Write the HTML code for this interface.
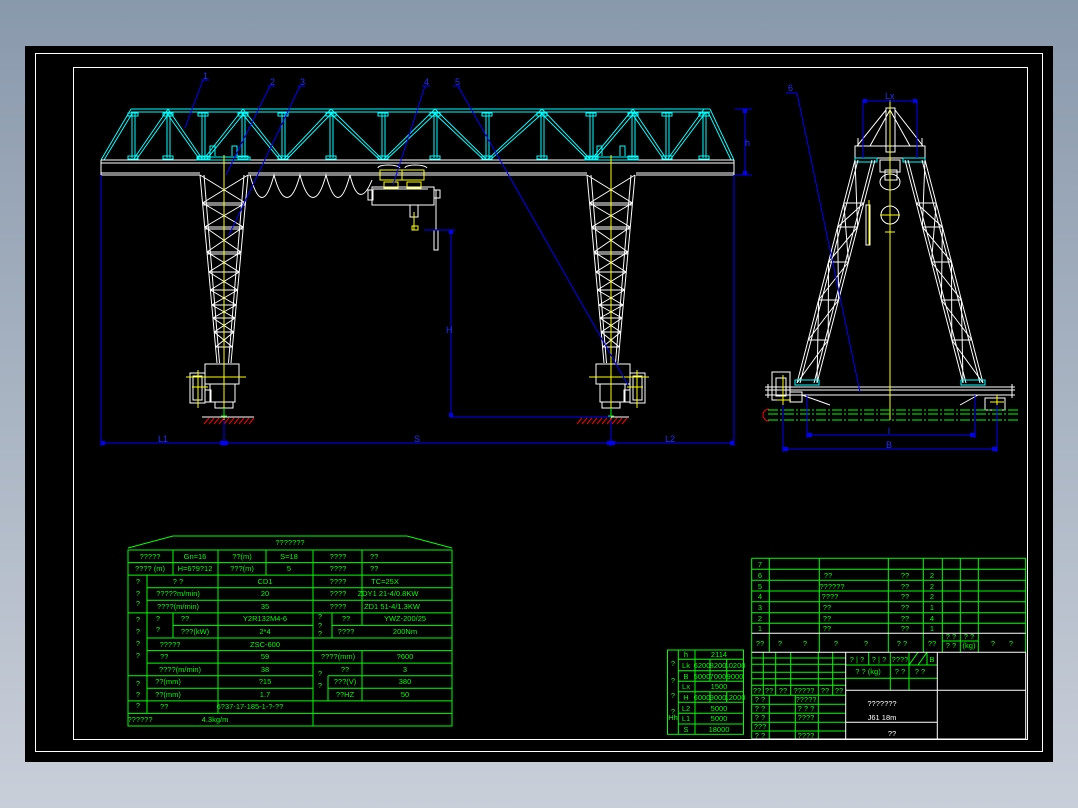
<!DOCTYPE html>
<html><head><meta charset="utf-8"><style>
html,body{margin:0;padding:0;width:1078px;height:808px;overflow:hidden;background:linear-gradient(#8999ac,#c9cfd9);}
svg{position:absolute;left:0;top:0;}
text{font-family:"Liberation Sans","DejaVu Sans",sans-serif;font-size:7.5px;fill:#00ff00;}
.w{stroke:#fff;fill:none;stroke-width:1}
.c{stroke:#00ffff;fill:none;stroke-width:1}
.y{stroke:#ffff00;fill:none;stroke-width:1}
.b{stroke:#0000ff;fill:none;stroke-width:1}
.g{stroke:#00ff00;fill:none;stroke-width:1}
.r{stroke:#ff0000;fill:none;stroke-width:1}
.bt{fill:#2030ff;font-size:9px}
.wt{fill:#fff}
</style></head><body>
<svg width="1078" height="808" viewBox="0 0 1078 808">
<rect x="25" y="46" width="1028" height="716" fill="#000"/>
<rect x="35.5" y="53.5" width="1007" height="698" class="w"/>
<rect x="73.5" y="67.5" width="954" height="672" class="w"/>

<!-- ========== FRONT VIEW ========== -->
<!-- truss -->
<path class="c" d="M131 109H710 M131 112H710 M101 160L131 109 M104 160L133 112 M734 160L710 109 M731 160L708 112
M133 160L168 109 M136 160L170 112 M168 109L203 160 M166 112L200 160 M203 160L243 109 M206 160L245 112 M243 109L283 160 M241 112L280 160
M283 160L331 109 M286 160L333 112 M331 109L383 160 M329 112L380 160 M383 160L435 109 M386 160L437 112 M435 109L487 160 M433 112L484 160
M487 160L542 109 M490 160L544 112 M542 109L591 160 M540 112L588 160 M591 160L633 109 M594 160L635 112 M633 109L667 160 M631 112L664 160 M667 160L704 109 M670 160L706 112"/>
<path class="c" d="M132 112V158M135 112V158 M167 112V158M170 112V158 M202 112V158M205 112V158 M242 112V158M245 112V158 M282 112V158M285 112V158 M330 112V158M333 112V158 M382 112V158M385 112V158 M434 112V158M437 112V158 M486 112V158M489 112V158 M541 112V158M544 112V158 M590 112V158M593 112V158 M632 112V158M635 112V158 M666 112V158M669 112V158 M703 112V158M706 112V158"/>
<path class="c" d="M128 113h10v3h-10z M163 113h10v3h-10z M198 113h10v3h-10z M238 113h10v3h-10z M278 113h10v3h-10z M326 113h10v3h-10z M378 113h10v3h-10z M430 113h10v3h-10z M482 113h10v3h-10z M537 113h10v3h-10z M586 113h10v3h-10z M628 113h10v3h-10z M662 113h10v3h-10z M699 113h10v3h-10z
M128 156h10v3h-10z M163 156h10v3h-10z M198 156h12v3h-12z M238 156h10v3h-10z M278 156h10v3h-10z M326 156h10v3h-10z M378 156h10v3h-10z M430 156h10v3h-10z M482 156h10v3h-10z M537 156h10v3h-10z M586 156h12v3h-12z M628 156h10v3h-10z M662 156h10v3h-10z M699 156h10v3h-10z"/>
<path class="c" d="M210 156V146h5v10 M232 156V146h5v10 M597 156V146h5v10 M620 156V146h5v10"/>
<!-- main beam -->
<path class="w" d="M101 160H734 M101 163H734 M101 173H200 M248 173H587 M636 173H734 M101 175H200 M248 175H587 M636 175H734 M101 160V175 M734 160V175"/>
<path class="c" d="M197 160h53v-3h-53z M585 160h53v-3h-53z"/>
<!-- legs -->
<g id="leg">
<path class="w" d="M200 175L217 363 M248 175L231 363 M204 175L219.5 363 M244 175L228.5 363
M200 175L245.5 203M248 175L202.5 203 M202.5 203L243.3 227M245.5 203L204.7 227 M204.7 227L241 252M243.3 227L207 252 M207 252L239.2 272M241 252L208.8 272 M208.8 272L237.6 290M239.2 272L210.4 290 M210.4 290L236.2 305M237.6 290L211.8 305 M211.8 305L235.1 318M236.2 305L212.9 318 M212.9 318L233.8 332M235.1 318L214.2 332 M214.2 332L232.4 347M233.8 332L215.6 347
M202.5 203H245.5 M204.7 227H243.3 M207 252H241 M208.8 272H239.2 M210.4 290H237.6 M211.8 305H236.2 M212.9 318H235.1 M214.2 332H233.8 M215.6 347H232.4 M202.5 205H245.5 M204.7 229H243.3 M207 254H241
M205 364h34v20h-34z M190 373h15v30h-15z M193 376h9v24h-9z M210 384h25v18h-25z M215 402h18v6h-18z M205 390h6v12h-6z"/>
<path class="y" d="M224 155V420 M186 377h60 M198 370v38 M192 387h16"/>
<path class="g" d="M224 408v8 M221 416h6"/>
<path class="w" d="M202 417H254"/>
<path class="r" d="M204 424l5-6M209 424l5-6M214 424l5-6M219 424l5-6M224 424l5-6M229 424l5-6M234 424l5-6M239 424l5-6M244 424l5-6M249 424l5-6"/>
</g>
<g transform="translate(387,0)"><path class="w" d="M200 175L217 363 M248 175L231 363 M204 175L219.5 363 M244 175L228.5 363
M200 175L245.5 203M248 175L202.5 203 M202.5 203L243.3 227M245.5 203L204.7 227 M204.7 227L241 252M243.3 227L207 252 M207 252L239.2 272M241 252L208.8 272 M208.8 272L237.6 290M239.2 272L210.4 290 M210.4 290L236.2 305M237.6 290L211.8 305 M211.8 305L235.1 318M236.2 305L212.9 318 M212.9 318L233.8 332M235.1 318L214.2 332 M214.2 332L232.4 347M233.8 332L215.6 347
M202.5 203H245.5 M204.7 227H243.3 M207 252H241 M208.8 272H239.2 M210.4 290H237.6 M211.8 305H236.2 M212.9 318H235.1 M214.2 332H233.8 M215.6 347H232.4 M202.5 205H245.5 M204.7 229H243.3 M207 254H241
M209 364h34v20h-34z M243 373h15v30h-15z M246 376h9v24h-9z M213 384h25v18h-25z M215 402h18v6h-18z M237 390h6v12h-6z"/>
<path class="y" d="M224 155V420 M202 377h60 M250 370v38 M240 387h16"/>
<path class="g" d="M224 408v8 M221 416h6"/>
<path class="w" d="M190 417H242"/>
<path class="r" d="M190 424l5-6M195 424l5-6M200 424l5-6M205 424l5-6M210 424l5-6M215 424l5-6M220 424l5-6M225 424l5-6M230 424l5-6M235 424l5-6"/></g>
<!-- festoon cable -->
<path class="w" d="M250 175 C258 205 266 205 274 175 C282 205 292 205 300 175 C308 205 318 205 326 175 C334 205 342 205 350 175 C356 200 364 200 372 180"/>
<!-- hoist -->
<path class="y" d="M380 170h22v10h-22z M402 170h22v10h-22z M384 182h14v6h-14z M407 182h14v6h-14z"/>
<path class="w" d="M378 168c0-4 20-4 22 0 M405 168c0-4 20-4 22 0 M372 187h62v18h-62z M368 190h5v10h-5z M434 190h6v8h-6z M373 189h55 M410 205v12h8v-12 M414 217v10 M436 190v40 M434 230h4v20h-4z"/>
<path class="y" d="M412 226h6v4h-6z M414 212v18"/>
<!-- dimensions -->
<path class="b" d="M101 175V446 M734 175V446 M101 443H734 M224 420V446 M611 420V446 M451 230V417 M424 230H455 M451 417H611 M735 109H752 M735 175H752 M745 109V175"/>
<path fill="#0000ff" d="M101 441h4v4h-4z M730 441h4v4h-4z M220 441h8v4h-8z M607 441h8v4h-8z M449 230h4v4h-4z M449 413h4v4h-4z M743 109h4v4h-4z M743 171h4v4h-4z"/>
<text class="bt" x="158" y="442" font-size="7">L1</text>
<text class="bt" x="414" y="442" font-size="7">S</text>
<text class="bt" x="665" y="442" font-size="7">L2</text>
<text class="bt" x="446" y="333" font-size="7">H</text>
<text class="bt" x="745" y="146" font-size="7">h</text>
<!-- leaders -->
<path class="b" d="M201 80H209 M203 80L185 128 M268 86H275 M270 86L226 175 M298 86H305 M300 86L229 235 M422 86H430 M425 86L393 185 M453 86H460 M458 86L628 385"/>
<text class="bt" x="203" y="79">1</text><text class="bt" x="270" y="85">2</text><text class="bt" x="300" y="85">3</text><text class="bt" x="424" y="85">4</text><text class="bt" x="455" y="85">5</text>

<!-- ========== SIDE VIEW ========== -->
<path class="w" d="M886 108h9v44h-9z M855 146h70v12h-70z M858 146v-8 M922 146v-8 M886 110L857 146 M895 110L923 146 M890 110L870 146 M890 110L910 146 M880 160h20v12h-20z"/>
<path class="c" d="M855 158h22v4h-22z M903 158h22v4h-22z"/>
<g id="sl"><path class="w" d="M855 160L797 383 M875 160L817 383 M858 160L800 383 M872 160L814 383
M843.8 203H863.8 M837.6 227H857.6 M828.5 262H848.5 M818.6 300H838.6 M808.2 340H828.2
M855 160L857.6 227 M863.8 203L837.6 227 M843.8 203L848.5 262 M857.6 227L828.5 262 M837.6 227L838.6 300 M848.5 262L818.6 300 M828.5 262L828.2 340 M838.6 300L808.2 340 M818.6 300L817 383 M828.2 340L797 383"/>
<path class="c" d="M795 380h24v5h-24z"/></g>
<g transform="translate(1780,0) scale(-1,1)"><path class="w" d="M855 160L797 383 M875 160L817 383 M858 160L800 383 M872 160L814 383
M843.8 203H863.8 M837.6 227H857.6 M828.5 262H848.5 M818.6 300H838.6 M808.2 340H828.2
M855 160L857.6 227 M863.8 203L837.6 227 M843.8 203L848.5 262 M857.6 227L828.5 262 M837.6 227L838.6 300 M848.5 262L818.6 300 M828.5 262L828.2 340 M838.6 300L808.2 340 M818.6 300L817 383 M828.2 340L797 383"/>
<path class="c" d="M795 380h24v5h-24z"/></g>
<path class="w" d="M765 387H1015 M765 390H1015 M765 395H1015 M768 384v14 M1012 384v14 M772 372h18v28h-18z M776 378h10v18h-10z M790 392h12v10h-12z M985 398h20v12h-20z M885 170h12v10h-12z M880 182a10 8 0 1 0 20 0a10 8 0 1 0 -20 0z M881 215a9 9 0 1 0 18 0a9 9 0 1 0 -18 0z M866 205h4v40h-4z M802 395L830 405 M978 395L960 405"/>
<path class="y" d="M890 100V420 M880 215h20 M885 232h10 M869 200v45 M783 375v35 M777 400h14 M997 395v30 M990 402h14"/>
<path class="g" d="M768 410H1018 M768 414H1018 M768 420H1018" stroke-dasharray="10 2 2 2"/>
<path class="r" d="M769 409a6 6 0 0 0 0 12"/>
<path class="b" d="M807 395V438 M975 395V438 M807 435H975 M783 405V452 M997 405V452 M783 449H997 M863 100V158 M917 100V158 M863 101H917"/>
<path fill="#0000ff" d="M807 433h5v4h-5z M970 433h5v4h-5z M783 447h5v4h-5z M992 447h5v4h-5z M863 99h4v4h-4z M913 99h4v4h-4z"/>
<text class="bt" x="888" y="434" font-size="7">l</text>
<text class="bt" x="886" y="448" font-size="7">B</text>
<text class="bt" x="885" y="99" font-size="7">Lx</text>
<path class="b" d="M786 93H797 M797 93L860 392"/>
<text class="bt" x="788" y="91">6</text>

<!-- ========== LEFT SPEC TABLE ========== -->
<g class="g">
<path d="M173 536H407 M173 536L128 548 M407 536L452 548"/>
<rect x="128" y="550" width="324" height="176"/>
<path d="M128 562.6H452 M128 575.1H452 M147 587.7H452 M147 600.3H452 M128 612.9H452 M173 625.4H313 M332 625.4H452 M147 638H452 M147 650.6H452 M147 663.1H313 M313 663.1H452 M128 675.7H313 M328 675.7H452 M147 688.3H313 M328 688.3H452 M128 700.9H452 M128 713.4H452
M313 550V726 M218 550V713.4 M173 550V575.1 M266 550V575.1 M362 550V612.9 M362 625.4V612.9 M147 575.1V713.4 M173 612.9V638 M332 612.9V638 M362 650.6V700.9 M328 675.7V700.9"/>
</g>
<g text-anchor="middle">
<text x="290" y="545" font-size="9">???????</text>
<text x="150" y="559">?????</text><text x="195" y="559">Gn=16</text><text x="242" y="559">??(m)</text><text x="289" y="559">S=18</text><text x="338" y="559">????</text><text x="370" y="559" text-anchor="start">??</text>
<text x="150" y="571">???? (m)</text><text x="195" y="571">H=6?9?12</text><text x="242" y="571">???(m)</text><text x="289" y="571">5</text><text x="338" y="571">????</text><text x="370" y="571" text-anchor="start">??</text>
<text x="138" y="584">?</text><text x="138" y="596">?</text><text x="138" y="606">?</text>
<text x="178" y="584">?    ?</text><text x="265" y="584">CD1</text><text x="338" y="584">????</text><text x="385" y="584">TC=25X</text>
<text x="178" y="596">?????m/min)</text><text x="265" y="596">20</text><text x="338" y="596">????</text><text x="388" y="596">ZDY1 21-4/0.8KW</text>
<text x="178" y="609">????(m/min)</text><text x="265" y="609">35</text><text x="338" y="609">????</text><text x="392" y="609">ZD1 51-4/1.3KW</text>
<text x="138" y="622">?</text><text x="138" y="634">?</text><text x="138" y="646">?</text><text x="138" y="658">?</text>
<text x="158" y="621">?</text><text x="158" y="632">?</text><text x="185" y="621">??</text><text x="265" y="621">Y2R132M4-6</text>
<text x="320" y="619">?</text><text x="320" y="628">?</text><text x="320" y="636">?</text><text x="346" y="621">??</text><text x="405" y="621">YWZ-200/25</text>
<text x="195" y="634">???(kW)</text><text x="265" y="634">2*4</text><text x="346" y="634">????</text><text x="405" y="634">200Nm</text>
<text x="170" y="647">?????</text><text x="265" y="647">ZSC-600</text>
<text x="160" y="659" text-anchor="start">??</text><text x="265" y="659">59</text><text x="338" y="659">????(mm)</text><text x="405" y="659">?600</text>
<text x="180" y="672">????(m/min)</text><text x="265" y="672">38</text><text x="320" y="676">?</text><text x="320" y="688">?</text><text x="345" y="672">??</text><text x="405" y="672">3</text>
<text x="138" y="686">?</text><text x="138" y="697">?</text><text x="138" y="708">?</text>
<text x="168" y="684">??(mm)</text><text x="265" y="684">?15</text><text x="345" y="684">???(V)</text><text x="405" y="684">380</text>
<text x="168" y="697">??(mm)</text><text x="265" y="697">1.7</text><text x="345" y="697">??HZ</text><text x="405" y="697">50</text>
<text x="160" y="709" text-anchor="start">??</text><text x="250" y="709">6?37-17-185-1-?-??</text>
<text x="140" y="722">??????</text><text x="215" y="722">4.3kg/m</text>
</g>

<!-- ========== SMALL PARAM TABLE ========== -->
<g class="g">
<rect x="667.5" y="650" width="76" height="84.3"/>
<path d="M678.3 659.3H743.3 M678.3 670.7H743.3 M678.3 681.3H743.3 M678.3 691.7H743.3 M678.3 702.3H743.3 M678.3 713.3H743.3 M678.3 724H743.3 M678.3 650V734.3 M695 650V734.3 M710 659.3V681.3 M726.7 659.3V681.3 M710 691.7V702.3 M726.7 691.7V702.3"/>
</g>
<g text-anchor="middle" font-size="7">
<text x="673" y="666">?</text><text x="673" y="683">?</text><text x="673" y="698">?</text><text x="673" y="714">?</text><text x="673" y="720">Hh</text>
<text x="686" y="657">h</text><text x="719" y="657">2114</text>
<text x="686" y="668">Lk</text><text x="702" y="668">6200</text><text x="718" y="668">8200</text><text x="735" y="668">10200</text>
<text x="686" y="679">B</text><text x="702" y="679">5000</text><text x="718" y="679">7000</text><text x="735" y="679">9000</text>
<text x="686" y="689">Lx</text><text x="719" y="689">1500</text>
<text x="686" y="700">H</text><text x="702" y="700">6000</text><text x="718" y="700">9000</text><text x="735" y="700">12000</text>
<text x="686" y="711">L2</text><text x="719" y="711">5000</text>
<text x="686" y="721">L1</text><text x="719" y="721">5000</text>
<text x="686" y="732">S</text><text x="719" y="732">18000</text>
</g>

<!-- ========== PARTS LIST / TITLE ========== -->
<g class="g">
<path d="M751.7 558.3H1025.7 M751.7 569.3H1025.7 M751.7 580.3H1025.7 M751.7 591H1025.7 M751.7 601.7H1025.7 M751.7 612.7H1025.7 M751.7 623.3H1025.7
M751.7 558.3V739 M769.3 558.3V652.3 M819.3 558.3V652.3 M888.3 558.3V652.3 M923.3 558.3V652.3 M942.3 558.3V652.3 M960.3 558.3V652.3 M978.3 558.3V652.3 M1025.7 558.3V652.3 M942.3 641H978.3"/>
<path d="M751.7 658H845.7 M751.7 664.3H845.7 M751.7 672.3H845.7 M751.7 678.7H845.7 M751.7 685.3H845.7 M751.7 695.3H845.7 M751.7 704.3H845.7 M751.7 713.3H845.7 M751.7 722.3H845.7 M751.7 731H845.7
M763.3 652.3V695.3 M775.7 652.3V695.3 M790.7 652.3V695.3 M818.3 652.3V739 M832.7 652.3V695.3 M769.3 695.3V739 M795.3 695.3V739
M845.7 665H937.3 M845.7 678.3H937.3 M868.7 652.3V665 M890.3 652.3V665 M909 652.3V665 M927 652.3V665 M909 665L918 652.3 M918 665L927 652.3 M890.3 665V690.3 M909 665V690.3"/>
</g>
<path class="w" d="M751.7 633.3H1025.7 M751.7 652.3H1025.7 M845.7 652.3V739 M937.3 652.3V739 M1025.7 652.3V739 M845.7 690.3H1025.7 M845.7 722.3H937.3 M751.7 739H1025.7"/>
<g text-anchor="middle" font-size="7">
<text x="760" y="567">7</text><text x="760" y="578">6</text><text x="760" y="589">5</text><text x="760" y="599">4</text><text x="760" y="610">3</text><text x="760" y="621">2</text><text x="760" y="631">1</text>
<text x="828" y="578">??</text><text x="832" y="589">??????</text><text x="830" y="599">????</text><text x="827" y="610">??</text><text x="827" y="621">??</text><text x="827" y="631">??</text>
<text x="905" y="578">??</text><text x="905" y="589">??</text><text x="905" y="599">??</text><text x="905" y="610">??</text><text x="905" y="621">??</text><text x="905" y="631">??</text>
<text x="932" y="578">2</text><text x="932" y="589">2</text><text x="932" y="599">2</text><text x="932" y="610">1</text><text x="932" y="621">4</text><text x="932" y="631">1</text>
<text x="760" y="646">??</text><text x="780" y="646">?</text><text x="805" y="646">?</text><text x="836" y="646">?</text><text x="866" y="646">?</text><text x="902" y="646">? ?</text><text x="932" y="646">??</text>
<text x="951" y="639">? ?</text><text x="969" y="639">? ?</text><text x="951" y="648">? ?</text><text x="969" y="648">(kg)</text><text x="993" y="646">?</text><text x="1011" y="646">?</text>
<text x="857" y="662">? | ?</text><text x="879" y="662">? | ?</text><text x="900" y="662">????</text><text x="932" y="662">B</text>
<text x="868" y="674">? ?  (kg)</text><text x="900" y="674">? ?</text><text x="920" y="674">? ?</text>
<text x="757" y="693">??</text><text x="769" y="693">??</text><text x="783" y="693">??</text><text x="804" y="693">?????</text><text x="825" y="693">??</text><text x="839" y="693">??</text>
<text x="760" y="702">? ?</text><text x="806" y="702">?????</text><text x="760" y="711">? ?</text><text x="806" y="711">? ? ?</text>
<text x="760" y="720">? ?</text><text x="806" y="720">????</text><text x="760" y="729">???</text><text x="760" y="738">? ?</text><text x="806" y="738">????</text>
<text x="882" y="706" class="wt" font-size="11">???????</text>
<text x="882" y="720" class="wt" font-size="10">J61    18m</text>
<text x="892" y="736" class="wt" font-size="8">??</text>
</g>
</svg>
</body></html>
